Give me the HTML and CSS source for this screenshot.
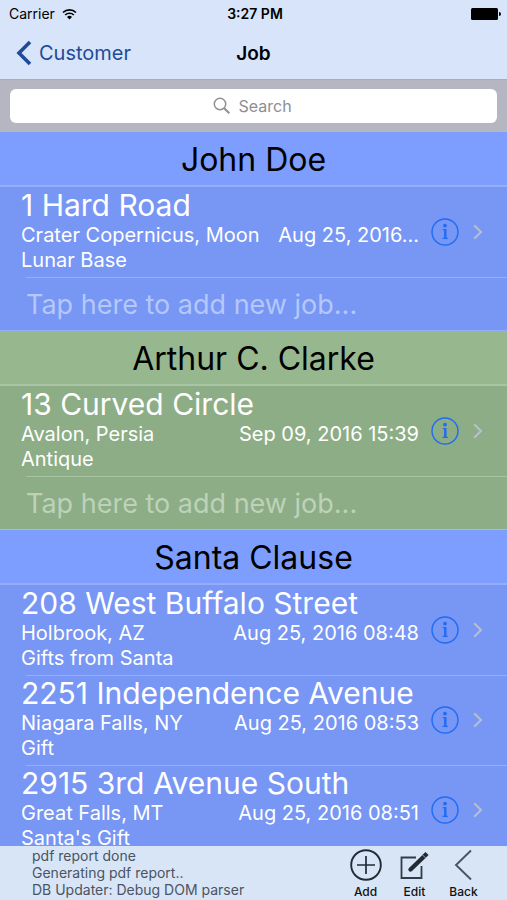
FILE: index.html
```html
<!DOCTYPE html>
<html lang="en">
<head>
    <meta charset="UTF-8">
    <meta name="viewport" content="width=device-width, initial-scale=1.0">
    <title>Job</title>
    <link rel="stylesheet" href="styles.css">
</head>
<body>
    <svg class="symbols" aria-hidden="true">
        <symbol id="info" viewBox="0 0 28 28">
            <circle cx="14" cy="14" r="13" fill="none" stroke="currentColor" stroke-width="1.4"/>
            <circle cx="14" cy="7.600" r="1.900" fill="currentColor"/>
            <path d="M11.800 11h3.700v8.800h1.300v1.200h-5.200v-1.200h1.500v-7.600h-1.300z" fill="currentColor"/>
        </symbol>
        <symbol id="chevron" viewBox="0 0 10 16">
            <path d="M1.200 1.200L8 8l-6.800 6.800" fill="none" stroke="currentColor" stroke-width="2"/>
        </symbol>
    </svg>
    <div class="app">
        <header class="top">
            <div class="status">
                <span class="carrier">Carrier
                    <svg width="15" height="12" viewBox="0 0 15 12" aria-hidden="true">
                        <path d="M1 4.500a9.300 9.300 0 0 1 13 0M3.200 7a6.200 6.200 0 0 1 8.600 0" fill="none" stroke="#000" stroke-width="1.700"/>
                        <path d="M5 8.900a3.600 3.600 0 0 1 5 0L7.500 11.600z"/>
                    </svg>
                </span>
                <span class="clock">3:27 PM</span>
                <svg class="battery" width="30" height="12" viewBox="0 0 30 12" aria-hidden="true">
                    <rect width="27" height="12" rx="1.500"/>
                    <path d="M28 4a2 2 0 0 1 0 4z"/>
                </svg>
            </div>
            <nav class="nav">
                <a class="back" href="#">
                    <svg width="16" height="26" viewBox="0 0 16 26" aria-hidden="true">
                        <path d="M14 2L3 13l11 11" fill="none" stroke="currentColor" stroke-width="3.600"/>
                    </svg>
                    Customer
                </a>
                <h1>Job</h1>
            </nav>
        </header>
        <div class="search">
            <label class="search-box">
                <svg width="18" height="18" viewBox="0 0 18 18" aria-hidden="true">
                    <circle cx="7" cy="7" r="5.700" fill="none" stroke="#8e8e93" stroke-width="1.500"/>
                    <path d="M11.200 11.200L16.300 16.300" stroke="#8e8e93" stroke-width="2"/>
                </svg>
                <input type="text" placeholder="Search" aria-label="Search">
            </label>
        </div>
        <main class="list">
            <section class="customer blue">
                <h2>John Doe</h2>
                <div class="job">
                    <div class="job-text">
                        <h3>1 Hard Road</h3>
                        <p class="place"><span>Crater Copernicus, Moon</span><span>Aug 25, 2016...</span></p>
                        <p>Lunar Base</p>
                    </div>
                    <button class="info" aria-label="Job info"><svg><use href="#info"/></svg></button>
                    <svg class="chevron"><use href="#chevron"/></svg>
                </div>
                <button class="add-job">Tap here to add new job...</button>
            </section>
            <section class="customer green">
                <h2>Arthur C. Clarke</h2>
                <div class="job">
                    <div class="job-text">
                        <h3>13 Curved Circle</h3>
                        <p class="place"><span>Avalon, Persia</span><span>Sep 09, 2016 15:39</span></p>
                        <p>Antique</p>
                    </div>
                    <button class="info" aria-label="Job info"><svg><use href="#info"/></svg></button>
                    <svg class="chevron"><use href="#chevron"/></svg>
                </div>
                <button class="add-job">Tap here to add new job...</button>
            </section>
            <section class="customer blue">
                <h2>Santa Clause</h2>
                <div class="job">
                    <div class="job-text">
                        <h3>208 West Buffalo Street</h3>
                        <p class="place"><span>Holbrook, AZ</span><span>Aug 25, 2016 08:48</span></p>
                        <p>Gifts from Santa</p>
                    </div>
                    <button class="info" aria-label="Job info"><svg><use href="#info"/></svg></button>
                    <svg class="chevron"><use href="#chevron"/></svg>
                </div>
                <div class="job">
                    <div class="job-text">
                        <h3>2251 Independence Avenue</h3>
                        <p class="place"><span>Niagara Falls, NY</span><span>Aug 25, 2016 08:53</span></p>
                        <p>Gift</p>
                    </div>
                    <button class="info" aria-label="Job info"><svg><use href="#info"/></svg></button>
                    <svg class="chevron"><use href="#chevron"/></svg>
                </div>
                <div class="job">
                    <div class="job-text">
                        <h3>2915 3rd Avenue South</h3>
                        <p class="place"><span>Great Falls, MT</span><span>Aug 25, 2016 08:51</span></p>
                        <p>Santa's Gift</p>
                    </div>
                    <button class="info" aria-label="Job info"><svg><use href="#info"/></svg></button>
                    <svg class="chevron"><use href="#chevron"/></svg>
                </div>
            </section>
        </main>
        <footer class="toolbar">
            <div class="log">
                <p>pdf report done</p>
                <p>Generating pdf report..</p>
                <p>DB Updater: Debug DOM parser</p>
            </div>
            <button class="tool">
                <svg width="32" height="32" viewBox="0 0 32 32" aria-hidden="true">
                    <path d="M16 7v18M7 16h18" stroke="#222b35" stroke-width="1.700"/>
                    <circle cx="16" cy="16" r="14.800" fill="none" stroke="#222b35" stroke-width="1.900"/>
                </svg>
                Add
            </button>
            <button class="tool">
                <svg width="32" height="32" viewBox="0 0 32 32" aria-hidden="true">
                    <path d="M17 8.500H2.500v20.500H22.500V17" fill="none" stroke="#333c46" stroke-width="1.800"/>
                    <path d="M11.500 20.500L25 7.500" stroke="#222a33" stroke-width="4.400" stroke-linecap="round"/>
                    <path d="M25 7.500l3-3" stroke="#222a33" stroke-width="4.400"/>
                    <path d="M23.300 5.700l3.500 3.500" stroke="#9aa6b5" stroke-width="1"/>
                </svg>
                Edit
            </button>
            <button class="tool">
                <svg width="32" height="32" viewBox="0 0 32 32" aria-hidden="true">
                    <path d="M23 1.500L8 16l15 14.500" fill="none" stroke="#4a535e" stroke-width="1.900"/>
                </svg>
                Back
            </button>
        </footer>
    </div>
</body>
</html>
```
FILE: styles.css
```css
* { box-sizing: border-box; }
body { margin: 0; font-family: Inter, "Liberation Sans", sans-serif; color: #000; }
h1, h2, h3, p { margin: 0; font-weight: 400; }
button { font-family: inherit; border: 0; padding: 0; background: none; cursor: pointer; }
svg { display: block; flex: none; }
.symbols { display: none; }
.app { display: flex; flex-direction: column; height: 100vh; }

.top { background: #d7e4f9; border-bottom: 1px solid #a5aec0; }
.status { display: grid; grid-template-columns: 1fr auto 1fr; align-items: center; height: 27px; padding: 0 6px 0 9px; font-size: 14px; }
.carrier { display: flex; align-items: center; gap: 7px; }
.clock { font-weight: 600; }
.battery { justify-self: end; }
.nav { display: grid; grid-template-columns: 1fr auto 1fr; align-items: center; height: 52px; padding: 0 16px; }
.nav h1 { font-size: 19px; font-weight: 600; }
.back { display: flex; align-items: center; gap: 7px; color: #1f4b98; font-size: 20px; text-decoration: none; }

.search { padding: 9px 10px; background: #b5b6c1; }
.search-box { display: flex; align-items: center; justify-content: center; gap: 8px; height: 34px; border-radius: 6px; background: #fff; }
.search-box input { width: 56px; padding: 0; border: 0; outline: 0; font: 16px Inter, sans-serif; background: none; }
.search-box input::placeholder { color: #8e8e93; opacity: 1; }

.list { flex: 1; min-height: 0; overflow-y: auto; scrollbar-width: none; }
.blue { --head: #7d9efe; --row: #7896f4; --line: #95aefa; --hint: #b4c8fc; }
.green { --head: #97b88f; --row: #8dad86; --line: #a9c4a3; --hint: #bed2b9; }
.customer { background: var(--row); color: #fff; }
.customer h2 { height: 55px; border-bottom: 2px solid var(--line); background: var(--head); color: #000; font-size: 32px; line-height: 56px; text-align: center; }
.job { display: flex; align-items: center; height: 90px; padding: 0 24px 0 21px; }
.job + .job, .add-job { background: linear-gradient(var(--line), var(--line)) 26px 0 / 100% 1px no-repeat; }
.job-text { flex: 1; min-width: 0; padding-bottom: 4px; white-space: nowrap; }
.job-text h3 { font-size: 30px; line-height: 36px; }
.job-text p { font-size: 20px; line-height: 25px; }
.job-text .place { display: flex; justify-content: space-between; }
.info { margin: 0 14px 0 12px; color: #1f6cf6; }
.info svg { width: 28px; height: 28px; }
.chevron { width: 10px; height: 16px; color: #b6c0d2; }
.customer .add-job { display: block; width: 100%; height: 54px; padding: 2px 0 0 26px; border-bottom: 1px solid var(--line); color: var(--hint); font-size: 27px; text-align: left; }

.toolbar { display: flex; height: 54px; padding-right: 19px; background: #d8e5f7; }
.log { flex: 1; padding: 1px 0 0 32px; color: #4a5462; font-size: 14px; font-weight: 500; line-height: 17px; white-space: nowrap; }
.tool { display: flex; flex-direction: column; align-items: center; width: 49px; padding-top: 3px; color: #111; font-size: 12px; font-weight: 500; line-height: 22px; }
```
